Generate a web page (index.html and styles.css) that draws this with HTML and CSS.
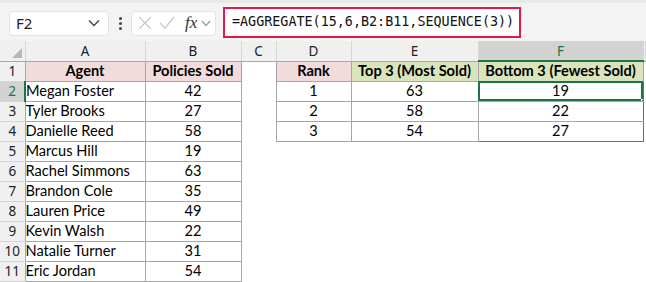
FILE: index.html
```html
<!DOCTYPE html>
<html lang="en">
<head>
  <meta charset="UTF-8" />
  <title>AGGREGATE top and bottom 3</title>
  <link rel="stylesheet" href="styles.css">
</head>
<body>
  <div class="formula-bar">
    <div class="name-box">
      <span>F2</span>
      <svg class="chev" width="12" height="8" viewBox="0 0 12 8"><path d="M1 1.5 L6 6.5 L11 1.5" fill="none" stroke="#444" stroke-width="1.4"/></svg>
    </div>
    <div class="dots"><i></i><i></i><i></i></div>
    <div class="fx-box">
      <svg width="14" height="14" viewBox="0 0 14 14"><path d="M1 1 L13 13 M13 1 L1 13" stroke="#c8c8c8" stroke-width="1.3"/></svg>
      <svg width="16" height="14" viewBox="0 0 16 14"><path d="M1 7 L6 12 L15 1" fill="none" stroke="#c8c8c8" stroke-width="1.3"/></svg>
      <span class="fx">fx</span>
      <svg width="10" height="7" viewBox="0 0 10 7"><path d="M1 1 L5 5.5 L9 1" fill="none" stroke="#999" stroke-width="1.2"/></svg>
    </div>
    <div class="formula">=AGGREGATE(15,6,B2:B11,SEQUENCE(3))</div>
  </div>

  <table class="sheet">
    <colgroup>
      <col class="w-rh"><col class="w-a"><col class="w-b"><col class="w-c"><col class="w-d"><col class="w-e"><col class="w-f"><col>
    </colgroup>
    <tr class="col-heads">
      <th class="corner"><span class="tri"></span></th>
      <th>A</th><th>B</th><th>C</th><th>D</th><th>E</th><th class="active">F</th><th></th>
    </tr>
    <tr>
      <th class="rh">1</th>
      <td class="hd pink">Agent</td><td class="hd pink">Policies Sold</td><td class="gap"></td>
      <td class="hd pink">Rank</td><td class="hd green">Top 3 (Most Sold)</td><td class="hd green">Bottom 3 (Fewest Sold)</td><td></td>
    </tr>
    <tr>
      <th class="rh active">2</th>
      <td class="name">Megan Foster</td><td class="num">42</td><td class="gap"></td>
      <td class="num">1</td><td class="num">63</td><td class="num spill sel">19<span class="handle"></span></td><td></td>
    </tr>
    <tr>
      <th class="rh">3</th>
      <td class="name">Tyler Brooks</td><td class="num">27</td><td class="gap"></td>
      <td class="num">2</td><td class="num">58</td><td class="num spill">22</td><td></td>
    </tr>
    <tr>
      <th class="rh">4</th>
      <td class="name">Danielle Reed</td><td class="num">58</td><td class="gap"></td>
      <td class="num">3</td><td class="num">54</td><td class="num spill last">27</td><td></td>
    </tr>
    <tr>
      <th class="rh">5</th>
      <td class="name">Marcus Hill</td><td class="num">19</td><td class="gap"></td><td class="blank" colspan="4"></td>
    </tr>
    <tr>
      <th class="rh">6</th>
      <td class="name">Rachel Simmons</td><td class="num">63</td><td class="gap"></td><td class="blank" colspan="4"></td>
    </tr>
    <tr>
      <th class="rh">7</th>
      <td class="name">Brandon Cole</td><td class="num">35</td><td class="gap"></td><td class="blank" colspan="4"></td>
    </tr>
    <tr>
      <th class="rh">8</th>
      <td class="name">Lauren Price</td><td class="num">49</td><td class="gap"></td><td class="blank" colspan="4"></td>
    </tr>
    <tr>
      <th class="rh">9</th>
      <td class="name">Kevin Walsh</td><td class="num">22</td><td class="gap"></td><td class="blank" colspan="4"></td>
    </tr>
    <tr>
      <th class="rh">10</th>
      <td class="name">Natalie Turner</td><td class="num">31</td><td class="gap"></td><td class="blank" colspan="4"></td>
    </tr>
    <tr>
      <th class="rh">11</th>
      <td class="name">Eric Jordan</td><td class="num">54</td><td class="gap"></td><td class="blank" colspan="4"></td>
    </tr>
    <tr class="tail">
      <th class="rh"></th><td class="stub"></td><td class="stub"></td><td class="gap"></td><td class="blank" colspan="4"></td>
    </tr>
  </table>
</body>
</html>
```

FILE: styles.css
```css
* {
  margin: 0;
  padding: 0;
  box-sizing: border-box;
}

body {
  background-color: white;
  width: 646px;
  height: 282px;
  overflow: hidden;
  font-family: Lato, 'Noto Sans', sans-serif;
}

/* formula bar */
.formula-bar {
  height: 41px;
  background-color: #f3f3f3;
  border-top: 3px solid #e9e9e9;
  display: flex;
  align-items: center;
  padding-left: 9px;
}

.name-box {
  width: 100px;
  height: 25px;
  background-color: white;
  border: 1px solid #e3e3e3;
  border-radius: 4px;
  display: flex;
  align-items: center;
  justify-content: space-between;
  padding: 0 8px 0 6px;
  font-family: 'Noto Sans', sans-serif;
  font-size: 15px;
  color: #222;
  margin-top: 2px;
}

.dots {
  width: 22px;
  display: flex;
  flex-direction: column;
  align-items: center;
  gap: 2px;
  margin-top: 2px;
}

.dots i {
  width: 3px;
  height: 3px;
  background-color: #444;
  border-radius: 50%;
}

.fx-box {
  width: 85px;
  height: 25px;
  background-color: white;
  border: 1px solid #e3e3e3;
  border-radius: 4px;
  display: flex;
  align-items: center;
  gap: 7px;
  padding-left: 6px;
  margin-top: 2px;
}

.fx {
  font-family: 'Liberation Serif', serif;
  font-style: italic;
  font-size: 17px;
  color: #333;
  margin-left: 3px;
  margin-right: -3px;
}

.formula {
  margin-left: 7px;
  width: 298px;
  height: 31px;
  border: 2.5px solid #e3194b;
  background-color: white;
  font-family: 'DejaVu Sans Mono', monospace;
  font-size: 13.4px;
  line-height: 26px;
  padding-left: 7px;
  color: #111;
  margin-top: 1px;
}

/* sheet grid */
.sheet {
  border-collapse: collapse;
  table-layout: fixed;
  width: 646px;
  font-size: 14.6px;
}

.w-rh { width: 25px; }
.w-a { width: 120px; }
.w-b { width: 96px; }
.w-c { width: 35px; }
.w-d { width: 75px; }
.w-e { width: 127px; }
.w-f { width: 165px; }

.sheet tr {
  height: 20px;
}

.sheet tr.tail {
  height: 2px;
}

.sheet td,
.sheet th {
  padding: 0;
  white-space: nowrap;
  overflow: hidden;
  line-height: 18px;
}

.tail th,
.tail td {
  line-height: 1px;
}

.col-heads th {
  background-color: #f0f0f0;
  border-right: 1px solid #d6d6d6;
  border-bottom: 1px solid #a8a8a8;
  font-weight: normal;
  color: #222;
  font-family: 'Noto Sans', sans-serif;
  font-size: 13.5px;
}

.col-heads th.active {
  background-color: #d3d3d3;
  color: #217346;
  border-bottom: 2px solid #217346;
}

.corner {
  position: relative;
}

.corner .tri {
  position: absolute;
  right: 3px;
  bottom: 3px;
  width: 0;
  height: 0;
  border-left: 10px solid transparent;
  border-bottom: 10px solid #b8b8b8;
}

.rh {
  background-color: #f0f0f0;
  border-right: 1px solid #a8a8a8;
  border-bottom: 1px solid #d6d6d6;
  font-weight: normal;
  color: #222;
  text-align: center;
  font-family: 'Noto Sans', sans-serif;
  font-size: 13.5px;
}

.rh.active {
  background-color: #d3d3d3;
  color: #217346;
  border-right: 2px solid #217346;
}

.tail .rh {
  border-bottom: none;
}

.hd,
.name,
.num {
  border: 1px solid #a6a6a6;
  color: #000;
}

.stub {
  border-left: 1px solid #a6a6a6;
  border-right: 1px solid #a6a6a6;
}

.hd {
  font-weight: bold;
  text-align: center;
}

.pink {
  background-color: #f2dcdb;
}

.green {
  background-color: #d8e4bc;
}

.name {
  padding-left: 3px;
}

.num {
  text-align: center;
}

.spill {
  border-left: 1px solid #4472c4;
  border-right: 1px solid #4472c4;
}

.spill.last {
  border-bottom: 1px solid #4472c4;
}

.sel {
  position: relative;
  overflow: visible;
  outline: 2px solid #217346;
  outline-offset: -2px;
}

.handle {
  position: absolute;
  right: -4px;
  bottom: -4px;
  width: 6px;
  height: 6px;
  background-color: #217346;
  border: 1px solid white;
}

.gap,
.blank {
  border: none;
}
```
